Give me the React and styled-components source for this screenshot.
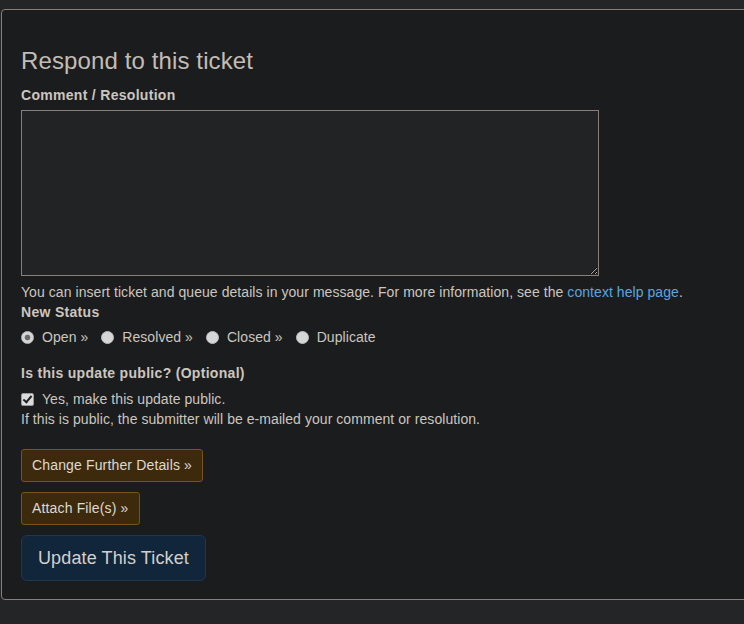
import styled, { createGlobalStyle } from "styled-components";

const Global = createGlobalStyle`
  html, body {
    margin: 0;
    background: #232527;
    overflow: hidden;
  }
  body {
    font-family: "Liberation Sans", Arial, sans-serif;
    font-size: 14px;
    line-height: 20px;
    letter-spacing: 0.06px;
    color: #cbc6bf;
  }
`;

const statuses = ["Open »", "Resolved »", "Closed »", "Duplicate"];

export default function App() {
  return (
    <>
      <Global />
      <Panel>
        <Title>Respond to this ticket</Title>
        <Label>Comment / Resolution</Label>
        <TextArea />
        <Help>
          You can insert ticket and queue details in your message. For more
          information, see the <Link href="#">context help page</Link>.
        </Help>
        <Label>New Status</Label>
        <RadioRow>
          {statuses.map((s, i) => (
            <RadioItem key={s}>
              <Radio type="radio" name="status" defaultChecked={i === 0} />
              {s}
            </RadioItem>
          ))}
        </RadioRow>
        <Label $top={16}>Is this update public? (Optional)</Label>
        <CheckRow>
          <Check type="checkbox" defaultChecked />
          Yes, make this update public.
        </CheckRow>
        <Help>
          If this is public, the submitter will be e-mailed your comment or
          resolution.
        </Help>
        <Buttons>
          <Button>Change Further Details »</Button>
          <Button>Attach File(s) »</Button>
          <PrimaryButton>Update This Ticket</PrimaryButton>
        </Buttons>
      </Panel>
    </>
  );
}

const Panel = styled.div`
  margin: 9px 0 0 1px;
  width: 780px;
  border: 1px solid #8a7f78;
  border-radius: 4px;
  background: #1b1c1e;
  padding: 36px 19px 18px;
  box-sizing: border-box;
`;

const Title = styled.h3`
  margin: 0 0 10px;
  font-size: 24px;
  line-height: 29px;
  font-weight: 400;
  letter-spacing: 0.12px;
  color: #c2bdb6;
`;

const Label = styled.div`
  font-weight: 700;
  letter-spacing: 0.3px;
  margin-top: ${({ $top }) => $top || 0}px;
`;

const TextArea = styled.textarea`
  display: block;
  margin: 5px 0 6px;
  width: 578px;
  height: 166px;
  box-sizing: border-box;
  background: #222325;
  border: 1px solid #8a7f78;
  border-radius: 0;
  color: #cbc6bf;
  outline: none;
`;

const Help = styled.div``;

const Link = styled.a`
  color: #58a6e0;
  text-decoration: none;
`;

const RadioRow = styled.div`
  display: flex;
  gap: 13px;
  margin-top: 5px;
`;

const RadioItem = styled.label`
  display: flex;
  align-items: center;
  gap: 8px;
`;

const Radio = styled.input`
  appearance: none;
  margin: 0;
  width: 13px;
  height: 13px;
  border-radius: 50%;
  background: #d6d6d6;
  border: 1px solid #bdbdbd;
  box-sizing: border-box;
  &:checked {
    background: radial-gradient(circle, #6a6a6a 0 2.5px, #d6d6d6 3.2px);
  }
`;

const CheckRow = styled.label`
  display: flex;
  align-items: center;
  gap: 8px;
  margin-top: 6px;
`;

const Check = styled.input`
  appearance: none;
  margin: 0;
  width: 13px;
  height: 13px;
  border-radius: 2px;
  background: #dcdcdc;
  border: 1px solid #9a9a9a;
  box-sizing: border-box;
  position: relative;
  &:checked::after {
    content: "";
    position: absolute;
    left: 3px;
    top: 0px;
    width: 3px;
    height: 7px;
    border: solid #222;
    border-width: 0 2px 2px 0;
    transform: rotate(40deg);
  }
`;

const Buttons = styled.div`
  display: flex;
  flex-direction: column;
  align-items: flex-start;
  gap: 10px;
  margin-top: 20px;
`;

const Button = styled.button`
  font-family: "Liberation Sans", Arial, sans-serif;
  font-size: 14px;
  line-height: 19px;
  letter-spacing: 0.15px;
  padding: 6px 10px;
  border: 1px solid #7a5319;
  border-radius: 3px;
  background: #3d2a0d;
  color: #ded9d2;
  cursor: pointer;
`;

const PrimaryButton = styled.button`
  font-family: "Liberation Sans", Arial, sans-serif;
  font-size: 18px;
  line-height: 24px;
  letter-spacing: 0.12px;
  padding: 10px 16px;
  border: 1px solid #1f3753;
  border-radius: 6px;
  background: #11263b;
  color: #d4d0ca;
  cursor: pointer;
`;
